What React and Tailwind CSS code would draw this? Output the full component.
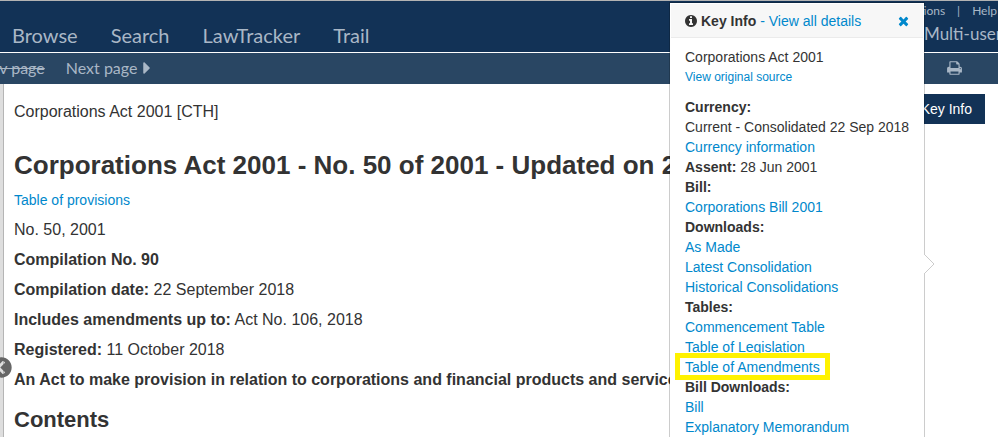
import React, { useState } from "react";
import { FaCaretRight, FaChevronCircleLeft } from "react-icons/fa";

const navItems = ["Browse", "Search", "LawTracker", "Trail"];

const details = [
  { label: "Compilation No. 90" },
  { label: "Compilation date:", value: "22 September 2018" },
  { label: "Includes amendments up to:", value: "Act No. 106, 2018" },
  { label: "Registered:", value: "11 October 2018" },
  {
    label:
      "An Act to make provision in relation to corporations and financial products and services, and for other purposes",
  },
];

const keyInfo = [
  { label: "Currency:" },
  { text: "Current - Consolidated 22 Sep 2018" },
  { link: "Currency information" },
  { label: "Assent:", text: "28 Jun 2001" },
  { label: "Bill:" },
  { link: "Corporations Bill 2001" },
  { label: "Downloads:" },
  { link: "As Made" },
  { link: "Latest Consolidation" },
  { link: "Historical Consolidations" },
  { label: "Tables:" },
  { link: "Commencement Table" },
  { link: "Table of Legislation" },
  { link: "Table of Amendments", highlight: true },
  { label: "Bill Downloads:" },
  { link: "Bill" },
  { link: "Explanatory Memorandum" },
];

function InfoIcon() {
  return (
    <svg viewBox="128 0 1536 1792" className="h-[14px] w-3 fill-current" aria-hidden="true">
      <path d="M1152 1376v-160q0-14-9-23t-23-9h-96v-512q0-14-9-23t-23-9h-320q-14 0-23 9t-9 23v160q0 14 9 23t23 9h96v320h-96q-14 0-23 9t-9 23v160q0 14 9 23t23 9h448q14 0 23-9t9-23zm-128-896v-160q0-14-9-23t-23-9h-192q-14 0-23 9t-9 23v160q0 14 9 23t23 9h192q14 0 23-9t9-23zm640 416q0 209-103 385.5t-279.5 279.5-385.5 103-385.5-103-279.5-279.5-103-385.5 103-385.5 279.5-279.5 385.5-103 385.5 103 279.5 279.5 103 385.5z" />
    </svg>
  );
}

function CloseIcon() {
  return (
    <svg viewBox="192 0 1408 1792" className="h-[14px] w-[11px] fill-current" aria-hidden="true">
      <path d="M1490 1322q0 40-28 68l-136 136q-28 28-68 28t-68-28l-294-294-294 294q-28 28-68 28t-68-28l-136-136q-28-28-28-68t28-68l294-294-294-294q-28-28-28-68t28-68l136-136q28-28 68-28t68 28l294 294 294-294q28-28 68-28t68 28l136 136q28 28 28 68t-28 68l-294 294 294 294q28 28 28 68z" />
    </svg>
  );
}

function PrintIcon() {
  return (
    <svg viewBox="0 0 1664 1792" className="h-4 w-[15px] fill-current" aria-hidden="true">
      <path d="M384 1536h896v-256h-896v256zM384 896h896v-384h-160q-40 0-68-28t-28-68v-160h-640v640zM1536 960q0-26-19-45t-45-19-45 19-19 45 19 45 45 19 45-19 19-45zM1664 960v416q0 13-9.5 22.5t-22.5 9.5h-224v160q0 40-28 68t-68 28h-960q-40 0-68-28t-28-68v-160h-224q-13 0-22.5-9.5t-9.5-22.5v-416q0-79 56.5-135.5t135.5-56.5h64v-544q0-40 28-68t68-28h672q40 0 88 20t76 48l152 152q28 28 48 76t20 88v256h64q79 0 135.5 56.5t56.5 135.5z" />
    </svg>
  );
}

function Header() {
  return (
    <header className="font-[Lato,sans-serif] text-[#a9b7c6]">
      <div className="flex h-[53px] justify-between border-t border-b border-t-[#b3b3b3] border-b-white bg-[#123256]">
        <nav className="flex items-end gap-[33px] pb-1 pl-3 text-[20px] leading-[26px]">
          {navItems.map((item) => (
            <a key={item} href="#">
              {item}
            </a>
          ))}
        </nav>

        <div className="flex w-[74px] flex-col whitespace-nowrap">
          <div className="flex justify-end gap-3 pr-px text-[12px] leading-5">
            <a href="#">Options</a>
            <span>|</span>
            <a href="#">Help</a>
          </div>
          <span className="text-[17px] leading-[26px]">Multi-user</span>
        </div>
      </div>

      <div className="flex h-[31px] items-center justify-between bg-[#294663] pr-9 pb-[2px] text-[16px]">
        <div className="-ml-6 flex items-center gap-[21px]">
          <a href="#" className="line-through">
            Prev page
          </a>
          <a href="#" className="flex items-center gap-[6px]">
            Next page
            <FaCaretRight className="h-5 w-2" />
          </a>
        </div>
        <button type="button" aria-label="Print">
          <PrintIcon />
        </button>
      </div>
    </header>
  );
}

function KeyInfoPopover({ onClose }) {
  return (
    <section className="absolute top-[2px] right-[73px] w-64 border border-black/20 bg-white bg-clip-padding p-px pb-[87px] text-[14px] leading-5">
      <div className="flex h-[34px] items-center justify-between border-b border-[#ebebeb] bg-[#f7f7f7] px-[14px]">
        <h3 className="flex items-center gap-1">
          <InfoIcon />
          <strong>Key Info</strong>
          <a href="#" className="text-[#0088cc]">
            - View all details
          </a>
        </h3>
        <button type="button" aria-label="Close" onClick={onClose} className="text-[#0088cc]">
          <CloseIcon />
        </button>
      </div>

      <div className="px-[14px] pt-[9px]">
        <p>Corporations Act 2001</p>
        <a href="#" className="block text-[12px] leading-5 text-[#0088cc]">
          View original source
        </a>

        <ul className="mt-[10px] whitespace-nowrap">
          {keyInfo.map((row, index) => (
            <li key={index}>
              {row.label && <strong>{row.label} </strong>}
              {row.text}
              {row.link && (
                <a href="#" className="relative inline-block align-top text-[#0088cc]">
                  {row.link}
                  {row.highlight && (
                    <span className="absolute -inset-x-[10px] -top-1 -bottom-[3px] border-[5px] border-[#fff200]" />
                  )}
                </a>
              )}
            </li>
          ))}
        </ul>
      </div>

      {/* arrow pointing at the Key Info button's side */}
      <svg
        viewBox="0 0 11 22"
        className="absolute top-1/2 left-full h-[22px] w-[11px] -translate-y-1/2"
        aria-hidden="true"
      >
        <path d="M0 1 L10 11 L0 21" fill="#fff" stroke="#ccc" />
      </svg>
    </section>
  );
}

export default function App() {
  const [open, setOpen] = useState(true);

  return (
    <div className="relative flex h-screen flex-col overflow-hidden bg-white font-['Liberation_Sans',Arial,sans-serif] text-[#333]">
      <Header />

      <div className="flex min-h-0 flex-1">
        <aside className="w-1 shrink-0 border-r border-[#b5b5b5] bg-[#dedede]">
          <button
            type="button"
            aria-label="Collapse sidebar"
            className="absolute top-[357px] -left-[9px] text-[#666]"
          >
            <FaChevronCircleLeft className="h-[21px] w-[21px]" />
          </button>
        </aside>

        <main className="min-w-0 flex-1 pl-[10px] text-[16px] leading-5 whitespace-nowrap">
          <div className="flex items-start justify-between pt-[10px] pr-[13px]">
            <p className="pt-2">Corporations Act 2001 [CTH]</p>
            <button
              type="button"
              onClick={() => setOpen(!open)}
              className="h-[30px] bg-[#123256] px-[13px] text-[14px] text-white"
            >
              Key Info
            </button>
          </div>

          <h1 className="mt-[21px] text-[26px] leading-10 font-bold">
            Corporations Act 2001 - No. 50 of 2001 - Updated on 22 September 2018
          </h1>
          <a href="#" className="mt-[5px] block text-[14px] text-[#0088cc]">
            Table of provisions
          </a>

          <div className="mt-[10px] flex flex-col gap-[10px]">
            <p>No. 50, 2001</p>
            {details.map((item) => (
              <p key={item.label}>
                <strong>{item.label}</strong> {item.value}
              </p>
            ))}
          </div>

          <h2 className="mt-[10px] text-[22px] leading-10 font-bold">Contents</h2>
        </main>
      </div>

      {open && <KeyInfoPopover onClose={() => setOpen(false)} />}
    </div>
  );
}
